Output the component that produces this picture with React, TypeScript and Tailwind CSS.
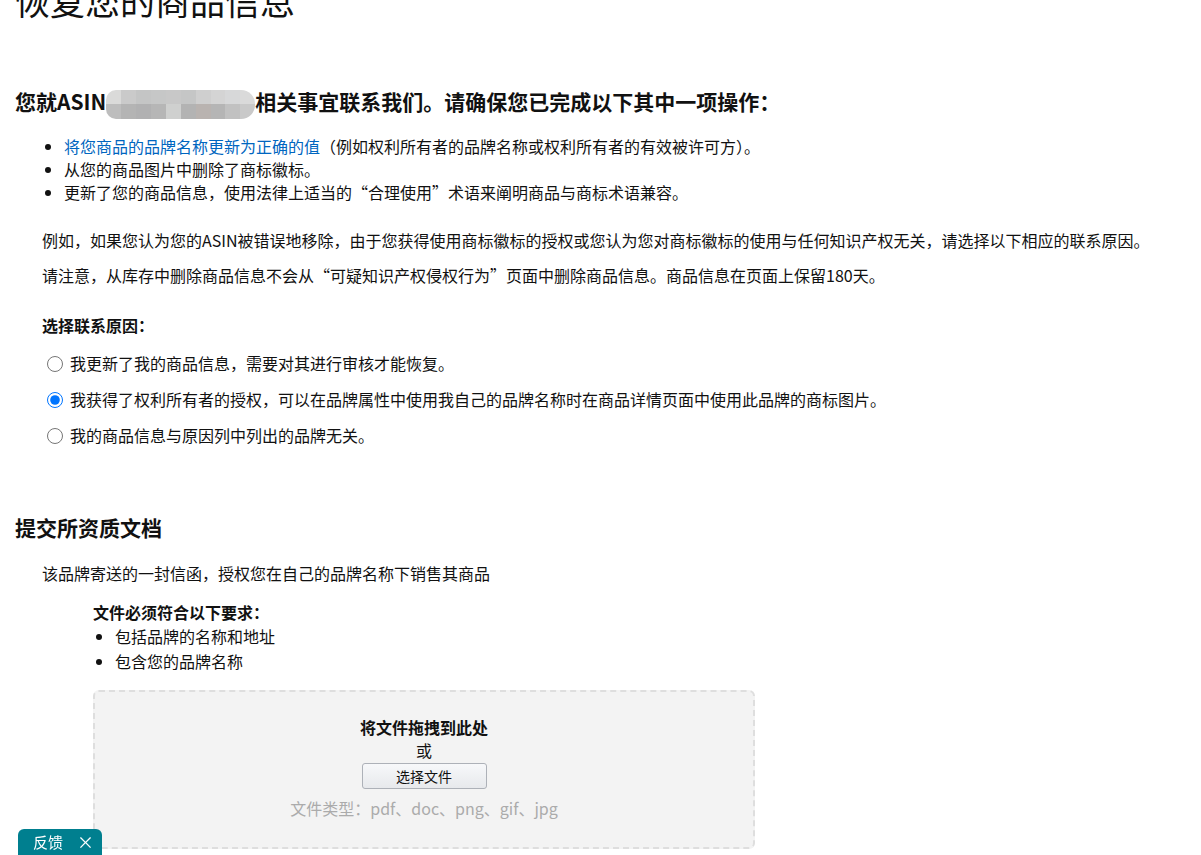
import { useState } from 'react'

const topRow = ['#dadad9', '#cacaca', '#c4c5c5', '#c6c7c7', '#c8c8c8', '#c5c6c6', '#cfcfcf', '#d4d4d4', '#d7d8d9', '#dadada']
const bottomRow = ['#bdbdbd', '#b4b4b4', '#b1b1b2', '#b6b6b6', '#cfd0cf', '#b3b3b3', '#b9b3b0', '#b5b5b5', '#c1c1c1', '#c9c9c9']

const reasons = [
  '我更新了我的商品信息，需要对其进行审核才能恢复。',
  '我获得了权利所有者的授权，可以在品牌属性中使用我自己的品牌名称时在商品详情页面中使用此品牌的商标图片。',
  '我的商品信息与原因列中列出的品牌无关。',
]

function Mosaic() {
  return (
    <span className="inline-grid grid-cols-10 w-[149px] h-[29px] align-middle -my-[10px] overflow-hidden rounded-l-[10px] rounded-r-[14px] blur-[0.4px]">
      {topRow.map((c, i) => (
        <span key={'t' + i} className="block h-[14px]" style={{ background: c }} />
      ))}
      {bottomRow.map((c, i) => (
        <span key={'b' + i} className="block h-[15px]" style={{ background: c }} />
      ))}
    </span>
  )
}

export default function App() {
  const [reason, setReason] = useState(1)

  return (
    <div className="min-h-screen bg-white text-[#111] font-['Noto_Sans_CJK_SC',sans-serif] text-[16px] overflow-hidden">
      <div className="pl-[15px] pr-4">
        <h1 className="text-[35px] leading-[40px] font-normal mt-[-20px]">恢复您的商品信息</h1>

        <h2 className="mt-[67px] h-[28px] text-[21px] leading-[28px] font-bold">
          您就ASIN
          <Mosaic />
          相关事宜联系我们。请确保您已完成以下其中一项操作：
        </h2>

        <ul className="mt-[20px] pl-[49px] list-disc leading-[23px]">
          <li>
            <a href="#" className="text-[#0066c0]">将您商品的品牌名称更新为正确的值</a>
            （例如权利所有者的品牌名称或权利所有者的有效被许可方）。
          </li>
          <li>从您的商品图片中删除了商标徽标。</li>
          <li>更新了您的商品信息，使用法律上适当的“合理使用”术语来阐明商品与商标术语兼容。</li>
        </ul>

        <div className="pl-[27px]">
          <p className="mt-[25px] leading-[23px] whitespace-nowrap">
            例如，如果您认为您的ASIN被错误地移除，由于您获得使用商标徽标的授权或您认为您对商标徽标的使用与任何知识产权无关，请选择以下相应的联系原因。
          </p>
          <p className="mt-[12px] leading-[23px]">
            请注意，从库存中删除商品信息不会从“可疑知识产权侵权行为”页面中删除商品信息。商品信息在页面上保留180天。
          </p>

          <p className="mt-[27px] leading-[23px] font-bold">选择联系原因：</p>

          <div className="mt-[15px] flex flex-col gap-[13px]">
            {reasons.map((r, i) => (
              <label key={i} className="flex items-center leading-[23px]">
                <input
                  type="radio"
                  name="reason"
                  checked={reason === i}
                  onChange={() => setReason(i)}
                  className="w-[16px] h-[16px] ml-[5px] mr-[7px] accent-[#0075ff]"
                />
                <span>{r}</span>
              </label>
            ))}
          </div>
        </div>

        <h2 className="mt-[66px] text-[21px] leading-[28px] font-bold">提交所资质文档</h2>

        <div className="pl-[27px]">
          <p className="mt-[21px] leading-[23px]">该品牌寄送的一封信函，授权您在自己的品牌名称下销售其商品</p>

          <div className="pl-[51px]">
            <p className="mt-[16px] leading-[23px] font-bold">文件必须符合以下要求：</p>
            <ul className="pl-[22px] list-disc leading-[24.5px]">
              <li>包括品牌的名称和地址</li>
              <li>包含您的品牌名称</li>
            </ul>

            <div className="mt-[17px] w-[662px] h-[159px] border-2 border-dashed border-[#dedede] rounded-[6px] bg-[#f3f3f3] flex flex-col items-center pt-[24px]">
              <p className="font-bold leading-[23px]">将文件拖拽到此处</p>
              <p className="leading-[23px]">或</p>
              <button className="mt-[1px] w-[125px] h-[26px] text-[14px] leading-[24px] border border-[#adb1b8] rounded-[3px] bg-gradient-to-b from-[#f7f8fa] to-[#e7e9ec]">
                选择文件
              </button>
              <p className="mt-[8px] leading-[23px] text-[#ababab]">文件类型：pdf、doc、png、gif、jpg</p>
            </div>
          </div>
        </div>
      </div>

      <div className="fixed left-[18px] bottom-0 w-[84px] h-[26px] bg-[#007f8f] rounded-t-[6px] text-white flex items-center pl-[15px] pr-[8px] text-[15px]">
        <span className="leading-[26px]">反馈</span>
        <span className="ml-auto text-[17px] leading-[26px]">×</span>
      </div>
    </div>
  )
}
